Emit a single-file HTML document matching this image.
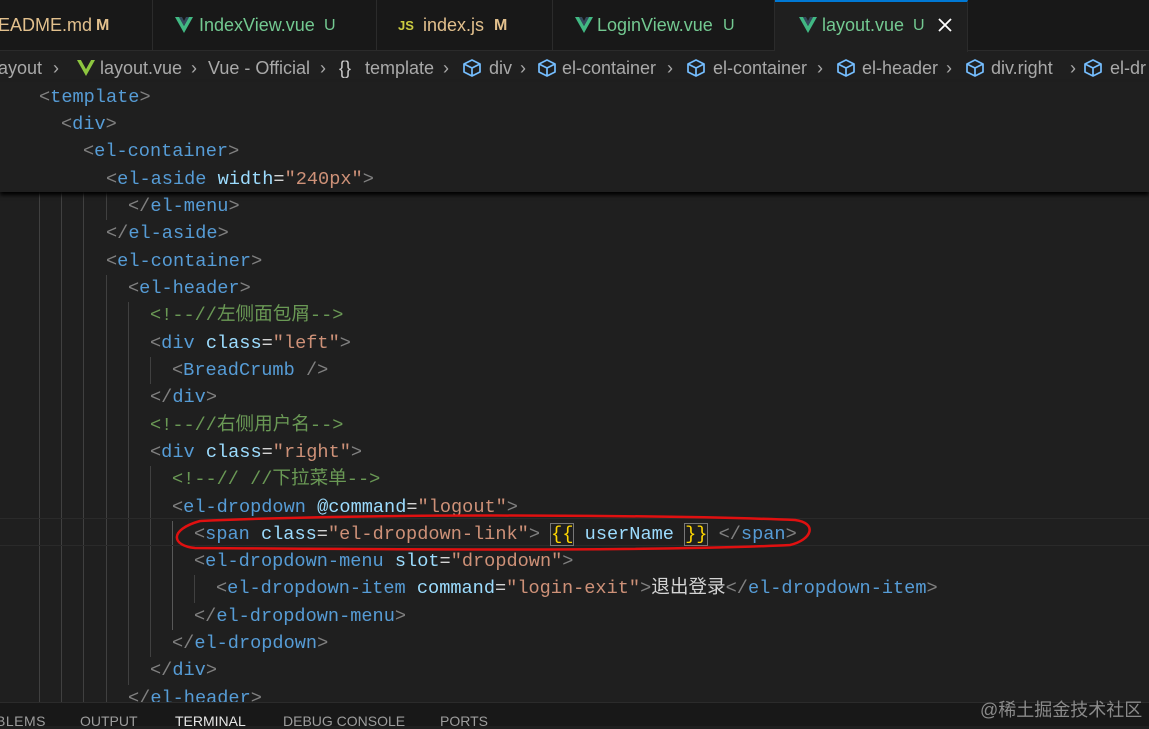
<!DOCTYPE html>
<html><head><meta charset="utf-8"><style>
*{margin:0;padding:0;box-sizing:border-box}
body{width:1149px;height:726px;overflow:hidden;background:#1f1f1f;position:relative;font-family:"Liberation Sans","Noto Sans CJK SC",sans-serif}
.a{position:absolute;white-space:pre}
.tabs{position:absolute;left:0;top:0;width:1149px;height:51px;background:#181818;border-bottom:1px solid #2b2b2b}
.tab{position:absolute;top:0;height:51px;border-right:1px solid #2b2b2b;font-size:18px;line-height:51px}
.bc{font-size:18px;color:#a9a9a9;top:55px;line-height:26px}
.code{font-family:"Liberation Mono","Noto Sans CJK SC",monospace;font-size:18.6px;line-height:27.3px;height:27.3px}
.t{color:#569cd6}.p{color:#808080}.at{color:#9cdcfe}.s{color:#ce9178}.c{color:#6a9955}.w{color:#d4d4d4}.y{color:#ffd700}
.g{position:absolute;width:1px;background:#404040}
</style></head><body>
<div class="tabs">
 <div class="tab" style="left:0;width:153px"><span class="a" style="left:-2px;color:#e2c08d">EADME.md</span><span class="a" style="left:96px;color:#e2c08d;font-weight:bold;font-size:16px">M</span></div>
 <div class="tab" style="left:153px;width:224px"><svg class="a" style="left:22px;top:17px" width="18" height="16" viewBox="0 0 18 16"><path d="M0 0h4l5 9 5-9h4L9 16z" fill="#41b883"/><path d="M4 0h3l2 4 2-4h3L9 9z" fill="#35495e"/></svg><span class="a" style="left:46px;color:#73c991">IndexView.vue</span><span class="a" style="left:171px;color:#73c991;font-size:16px">U</span></div>
 <div class="tab" style="left:377px;width:176px"><span class="a" style="left:21px;color:#cbcb41;font-weight:bold;font-size:13px">JS</span><span class="a" style="left:46px;color:#e2c08d">index.js</span><span class="a" style="left:117px;color:#e2c08d;font-weight:bold;font-size:16px">M</span></div>
 <div class="tab" style="left:553px;width:222px"><svg class="a" style="left:22px;top:17px" width="18" height="16" viewBox="0 0 18 16"><path d="M0 0h4l5 9 5-9h4L9 16z" fill="#41b883"/><path d="M4 0h3l2 4 2-4h3L9 9z" fill="#35495e"/></svg><span class="a" style="left:44px;color:#73c991">LoginView.vue</span><span class="a" style="left:170px;color:#73c991;font-size:16px">U</span></div>
 <div class="tab" style="left:775px;width:193px;height:52px;background:#1f1f1f;border-top:2px solid #0078d4"><svg class="a" style="left:24px;top:15px" width="18" height="16" viewBox="0 0 18 16"><path d="M0 0h4l5 9 5-9h4L9 16z" fill="#41b883"/><path d="M4 0h3l2 4 2-4h3L9 9z" fill="#35495e"/></svg><span class="a" style="left:47px;top:-2px;color:#73c991">layout.vue</span><span class="a" style="left:138px;top:-2px;color:#73c991;font-size:16px">U</span><svg class="a" style="left:163px;top:16px" width="14" height="14" viewBox="0 0 14 14"><path d="M1 1L13 13M13 1L1 13" stroke="#fff" stroke-width="1.8"/></svg></div>
</div>
<!-- breadcrumb -->
<span class="a bc" style="left:-2px">ayout</span><span class="a bc" style="left:53px">›</span>
<svg class="a" style="left:77px;top:60px" width="18" height="16" viewBox="0 0 18 16"><path d="M0 0h4l5 9 5-9h4L9 16z" fill="#8dc63f"/><path d="M4 0h3l2 4 2-4h3L9 9z" fill="#1f1f1f"/></svg>
<span class="a bc" style="left:100px">layout.vue</span><span class="a bc" style="left:191px">›</span>
<span class="a bc" style="left:208px">Vue - Official</span><span class="a bc" style="left:320px">›</span>
<span class="a bc" style="left:339px;color:#ccc">{}</span><span class="a bc" style="left:365px">template</span><span class="a bc" style="left:443px">›</span>
<svg width="0" height="0" style="position:absolute"><defs><symbol id="cb" viewBox="0 0 20 20"><path d="M10 2L18 6V14L10 18L2 14V6Z M2 6L10 10L18 6 M10 10V18" fill="none" stroke="#75beff" stroke-width="1.7" stroke-linejoin="round"/></symbol></defs></svg>
<svg class="a" style="left:462px;top:58px" width="20" height="20"><use href="#cb"/></svg><span class="a bc" style="left:489px">div</span><span class="a bc" style="left:520px">›</span>
<svg class="a" style="left:537px;top:58px" width="20" height="20"><use href="#cb"/></svg><span class="a bc" style="left:562px">el-container</span><span class="a bc" style="left:667px">›</span>
<svg class="a" style="left:686px;top:58px" width="20" height="20"><use href="#cb"/></svg><span class="a bc" style="left:713px">el-container</span><span class="a bc" style="left:817px">›</span>
<svg class="a" style="left:836px;top:58px" width="20" height="20"><use href="#cb"/></svg><span class="a bc" style="left:862px">el-header</span><span class="a bc" style="left:946px">›</span>
<svg class="a" style="left:965px;top:58px" width="20" height="20"><use href="#cb"/></svg><span class="a bc" style="left:991px">div.right</span><span class="a bc" style="left:1070px">›</span>
<svg class="a" style="left:1083px;top:58px" width="20" height="20"><use href="#cb"/></svg><span class="a bc" style="left:1110px">el-dr</span>

<!-- indent guides -->
<div class="g" style="left:39px;top:192px;height:510px"></div>
<div class="g" style="left:61px;top:192px;height:510px"></div>
<div class="g" style="left:83px;top:192px;height:510px"></div>
<div class="g" style="left:106px;top:192px;height:28px"></div>
<div class="g" style="left:106px;top:275px;height:427px"></div>
<div class="g" style="left:128px;top:302px;height:383px"></div>
<div class="g" style="left:150px;top:357px;height:27px"></div>
<div class="g" style="left:150px;top:466px;height:191px"></div>
<div class="g" style="left:172px;top:521px;height:109px;background:#585858"></div>
<div class="g" style="left:194px;top:575px;height:28px"></div>
<!-- current line -->
<div class="a" style="left:0;top:518px;width:1149px;height:28px;border-top:1px solid #2a2a2a;border-bottom:1px solid #2a2a2a"></div>

<div class="a code" style="top:193px;left:128px"><span class="p">&lt;/</span><span class="t">el-menu</span><span class="p">&gt;</span></div>
<div class="a code" style="top:220px;left:106px"><span class="p">&lt;/</span><span class="t">el-aside</span><span class="p">&gt;</span></div>
<div class="a code" style="top:248px;left:106px"><span class="p">&lt;</span><span class="t">el-container</span><span class="p">&gt;</span></div>
<div class="a code" style="top:275px;left:128px"><span class="p">&lt;</span><span class="t">el-header</span><span class="p">&gt;</span></div>
<div class="a code" style="top:302px;left:150px"><span class="c">&lt;!--//左侧面包屑--&gt;</span></div>
<div class="a code" style="top:330px;left:150px"><span class="p">&lt;</span><span class="t">div</span> <span class="at">class</span><span class="w">=</span><span class="s">"left"</span><span class="p">&gt;</span></div>
<div class="a code" style="top:357px;left:172px"><span class="p">&lt;</span><span class="t">BreadCrumb</span> <span class="p">/&gt;</span></div>
<div class="a code" style="top:384px;left:150px"><span class="p">&lt;/</span><span class="t">div</span><span class="p">&gt;</span></div>
<div class="a code" style="top:412px;left:150px"><span class="c">&lt;!--//右侧用户名--&gt;</span></div>
<div class="a code" style="top:439px;left:150px"><span class="p">&lt;</span><span class="t">div</span> <span class="at">class</span><span class="w">=</span><span class="s">"right"</span><span class="p">&gt;</span></div>
<div class="a code" style="top:466px;left:172px"><span class="c">&lt;!--// //下拉菜单--&gt;</span></div>
<div class="a code" style="top:494px;left:172px"><span class="p">&lt;</span><span class="t">el-dropdown</span> <span class="at">@command</span><span class="w">=</span><span class="s">"logout"</span><span class="p">&gt;</span></div>
<div class="a code" style="top:521px;left:194px"><span class="p">&lt;</span><span class="t">span</span> <span class="at">class</span><span class="w">=</span><span class="s">"el-dropdown-link"</span><span class="p">&gt;</span> <span class="y" style="outline:1px solid #777">{{</span> <span class="at">userName</span> <span class="y" style="outline:1px solid #777">}}</span> <span class="p">&lt;/</span><span class="t">span</span><span class="p">&gt;</span></div>
<div class="a code" style="top:548px;left:194px"><span class="p">&lt;</span><span class="t">el-dropdown-menu</span> <span class="at">slot</span><span class="w">=</span><span class="s">"dropdown"</span><span class="p">&gt;</span></div>
<div class="a code" style="top:575px;left:216px"><span class="p">&lt;</span><span class="t">el-dropdown-item</span> <span class="at">command</span><span class="w">=</span><span class="s">"login-exit"</span><span class="p">&gt;</span><span class="w">退出登录</span><span class="p">&lt;/</span><span class="t">el-dropdown-item</span><span class="p">&gt;</span></div>
<div class="a code" style="top:603px;left:194px"><span class="p">&lt;/</span><span class="t">el-dropdown-menu</span><span class="p">&gt;</span></div>
<div class="a code" style="top:630px;left:172px"><span class="p">&lt;/</span><span class="t">el-dropdown</span><span class="p">&gt;</span></div>
<div class="a code" style="top:657px;left:150px"><span class="p">&lt;/</span><span class="t">div</span><span class="p">&gt;</span></div>
<div class="a code" style="top:685px;left:128px"><span class="p">&lt;/</span><span class="t">el-header</span><span class="p">&gt;</span></div>

<!-- sticky scroll -->
<div class="a" style="left:0;top:82px;width:1149px;height:110px;background:#1f1f1f;box-shadow:0 3px 4px #000"></div>
<div class="a code" style="top:84px;left:39px"><span class="p">&lt;</span><span class="t">template</span><span class="p">&gt;</span></div>
<div class="a code" style="top:111px;left:61px"><span class="p">&lt;</span><span class="t">div</span><span class="p">&gt;</span></div>
<div class="a code" style="top:138px;left:83px"><span class="p">&lt;</span><span class="t">el-container</span><span class="p">&gt;</span></div>
<div class="a code" style="top:166px;left:106px"><span class="p">&lt;</span><span class="t">el-aside</span> <span class="at">width</span><span class="w">=</span><span class="s">"240px"</span><span class="p">&gt;</span></div>

<!-- red ellipse -->
<svg class="a" style="left:0;top:0" width="1149" height="726"><path d="M200 521 C400 512 700 516 795 520 C818 523 812 540 790 545 C650 552 350 549 195 548 C172 546 168 530 200 521 Z" fill="none" stroke="#e01010" stroke-width="2.5"/></svg>

<!-- panel -->
<div class="a" style="left:0;top:702px;width:1149px;height:24px;background:#181818;border-top:1px solid #2b2b2b"></div>
<div class="a" style="left:-4px;top:713px;font-size:14px;color:#9d9d9d;letter-spacing:0.5px">BLEMS</div>
<div class="a" style="left:80px;top:713px;font-size:14px;color:#9d9d9d">OUTPUT</div>
<div class="a" style="left:175px;top:713px;font-size:14px;color:#e7e7e7">TERMINAL</div>
<div class="a" style="left:283px;top:713px;font-size:14px;color:#9d9d9d">DEBUG CONSOLE</div>
<div class="a" style="left:440px;top:713px;font-size:14px;color:#9d9d9d">PORTS</div>
<div class="a" style="left:980px;top:696px;font-size:18px;color:#8a8a8a">@稀土掘金技术社区</div>
</body></html>
